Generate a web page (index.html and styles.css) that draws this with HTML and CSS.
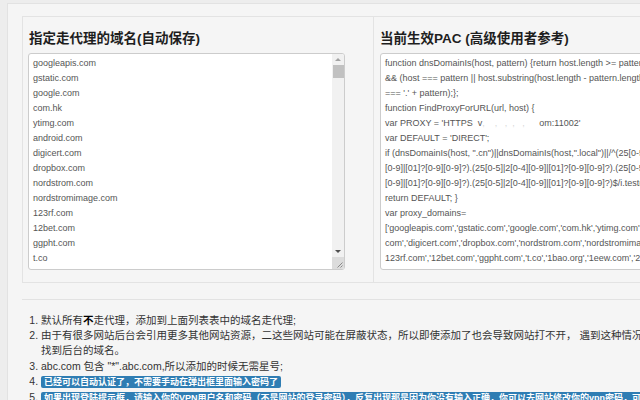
FILE: index.html
```html
<!DOCTYPE html>
<html lang="zh-CN">
<head>
<meta charset="utf-8">
<title>PAC</title>
<link rel="stylesheet" href="styles.css">
</head>
<body>
<div class="page">
  <div class="panels">
    <section class="panel">
      <h3 class="title">指定走代理的域名(自动保存)</h3>
      <div class="box box-domains">
        <div class="lines">
          <div>googleapis.com</div>
          <div>gstatic.com</div>
          <div>google.com</div>
          <div>com.hk</div>
          <div>ytimg.com</div>
          <div>android.com</div>
          <div>digicert.com</div>
          <div>dropbox.com</div>
          <div>nordstrom.com</div>
          <div>nordstromimage.com</div>
          <div>123rf.com</div>
          <div>12bet.com</div>
          <div>ggpht.com</div>
          <div>t.co</div>
          <div>1bao.org</div>
        </div>
        <div class="scrollbar">
          <span class="sb-btn"><span class="arrow-up"></span></span>
          <span class="thumb"></span>
          <span class="track"></span>
          <span class="sb-btn"><span class="arrow-down"></span></span>
          <span class="grip">
            <svg width="12" height="12" viewBox="0 0 12 12"><path d="M10.5 5.5 L5.5 10.5 M10.5 8.5 L8.5 10.5" stroke="#8a8a8a" stroke-width="1" fill="none"/></svg>
          </span>
        </div>
      </div>
    </section>
    <section class="panel">
      <h3 class="title">当前生效PAC (高级使用者参考)</h3>
      <div class="box box-code">
        <div class="code-line">function dnsDomainIs(host, pattern) {return host.length &gt;= pattern.length</div>
        <div class="code-line">&amp;&amp; (host === pattern || host.substring(host.length - pattern.length - 1)</div>
        <div class="code-line">=== '.' + pattern);};</div>
        <div class="code-line">function FindProxyForURL(url, host) {</div>
        <div class="code-line">var PROXY = 'HTTPS  v<span class="redacted">,    ,   ,  ,   ,</span>om:11002'</div>
        <div class="code-line">var DEFAULT = 'DIRECT';</div>
        <div class="code-line">if (dnsDomainIs(host, ".cn")||dnsDomainIs(host,".local")||/^(25[0-5]|2[0-4]</div>
        <div class="code-line">[0-9]|[01]?[0-9][0-9]?).(25[0-5]|2[0-4][0-9]|[01]?[0-9][0-9]?).(25[0-5]|2[0-4]</div>
        <div class="code-line">[0-9]|[01]?[0-9][0-9]?).(25[0-5]|2[0-4][0-9]|[01]?[0-9][0-9]?)$/i.test(host))</div>
        <div class="code-line">return DEFAULT; }</div>
        <div class="code-line">var proxy_domains=</div>
        <div class="code-line">['googleapis.com','gstatic.com','google.com','com.hk','ytimg.com','android.</div>
        <div class="code-line">com','digicert.com','dropbox.com','nordstrom.com','nordstromimage.com','</div>
        <div class="code-line">123rf.com','12bet.com','ggpht.com','t.co','1bao.org','1eew.com','2mdn.net'</div>
      </div>
    </section>
  </div>
  <hr class="rule">
  <ol class="notes">
    <li>默认所有<b>不</b>走代理，添加到上面列表表中的域名走代理;</li>
    <li>由于有很多网站后台会引用更多其他网站资源，二这些网站可能在屏蔽状态，所以即使添加了也会导致网站打不开， 遇到这种情况请使用开发者工具<br>找到后台的域名。</li>
    <li>abc.com 包含 "*".abc.com,所以添加的时候无需星号;</li>
    <li><span class="label">已经可以自动认证了，不需要手动在弹出框里面输入密码了</span></li>
    <li><span class="label">如果出现登陆提示框，请输入你的VPN用户名和密码（不是网站的登录密码），反复出现那是因为你没有输入正确，你可以去网站修改你的vpn密码，可以联系客服</span></li>
  </ol>
</div>
</body>
</html>
```

FILE: styles.css
```css
html {
  overflow: hidden;
}

body {
  margin: 0;
  background: #ededed;
  font-family: "Liberation Sans", Arial, "Noto Sans CJK SC", sans-serif;
}

.page {
  width: 1000px;
  min-height: 420px;
  margin: 3px 0 0 7px;
  padding: 12px 0 0 14px;
  background: #f5f5f5;
  border-top: 1px solid #e2e2e2;
  border-left: 1px solid #e2e2e2;
}

.panels {
  display: grid;
  grid-template-columns: 351px 351px;
  width: max-content;
  border: 1px solid #e3e3e3;
}

.panel {
  padding: 12px 6px;
}

.panel:first-child {
  border-right: 1px solid #e3e3e3;
}

.title {
  margin: 0 0 4px;
  font-size: 13.5px;
  line-height: 20px;
  font-weight: bold;
  color: #1e1e1e;
}

.box {
  height: 217px;
  box-sizing: border-box;
  border: 1px solid #cccccc;
  border-radius: 3px;
  background: #ffffff;
  overflow: hidden;
  font-size: 9px;
  line-height: 15px;
  color: #555;
}

.box-domains {
  width: 317px;
  margin-left: -1px;
  display: flex;
}

.lines {
  flex: 1;
  padding: 2px 0 0 4px;
  white-space: nowrap;
}

.scrollbar {
  width: 12px;
  display: flex;
  flex-direction: column;
  background: #f1f1f1;
}

.sb-btn {
  height: 11px;
  display: flex;
  align-items: center;
  justify-content: center;
}

.arrow-up {
  width: 0;
  height: 0;
  border-left: 3px solid transparent;
  border-right: 3px solid transparent;
  border-bottom: 3px solid #a3a3a3;
}

.arrow-down {
  width: 0;
  height: 0;
  border-left: 3px solid transparent;
  border-right: 3px solid transparent;
  border-top: 3px solid #505050;
}

.thumb {
  height: 13px;
  margin: 0 0.5px;
  background: #c1c1c1;
}

.track {
  flex: 1;
}

.grip {
  height: 12px;
  background: #dcdcdc;
  display: block;
}

.grip svg {
  display: block;
}

.box-code {
  padding: 2px 4px;
}

.code-line {
  white-space: pre;
}

.redacted {
  display: inline-block;
  width: 57px;
  overflow: hidden;
  vertical-align: top;
  color: #d6d6d6;
}

.rule {
  margin: 16px 0 0;
  height: 0;
  border: 0;
  border-top: 1px solid #e2e2e2;
}

.notes {
  margin: 13px 0 0;
  padding-left: 19px;
  font-size: 10.5px;
  line-height: 15.2px;
  color: #333;
}

.notes b {
  color: #000;
}

.label {
  background: #2f7db3;
  color: #ffffff;
  font-weight: bold;
  font-size: 9px;
  padding: 1px 3px;
  border-radius: 2px;
  white-space: nowrap;
}
```
